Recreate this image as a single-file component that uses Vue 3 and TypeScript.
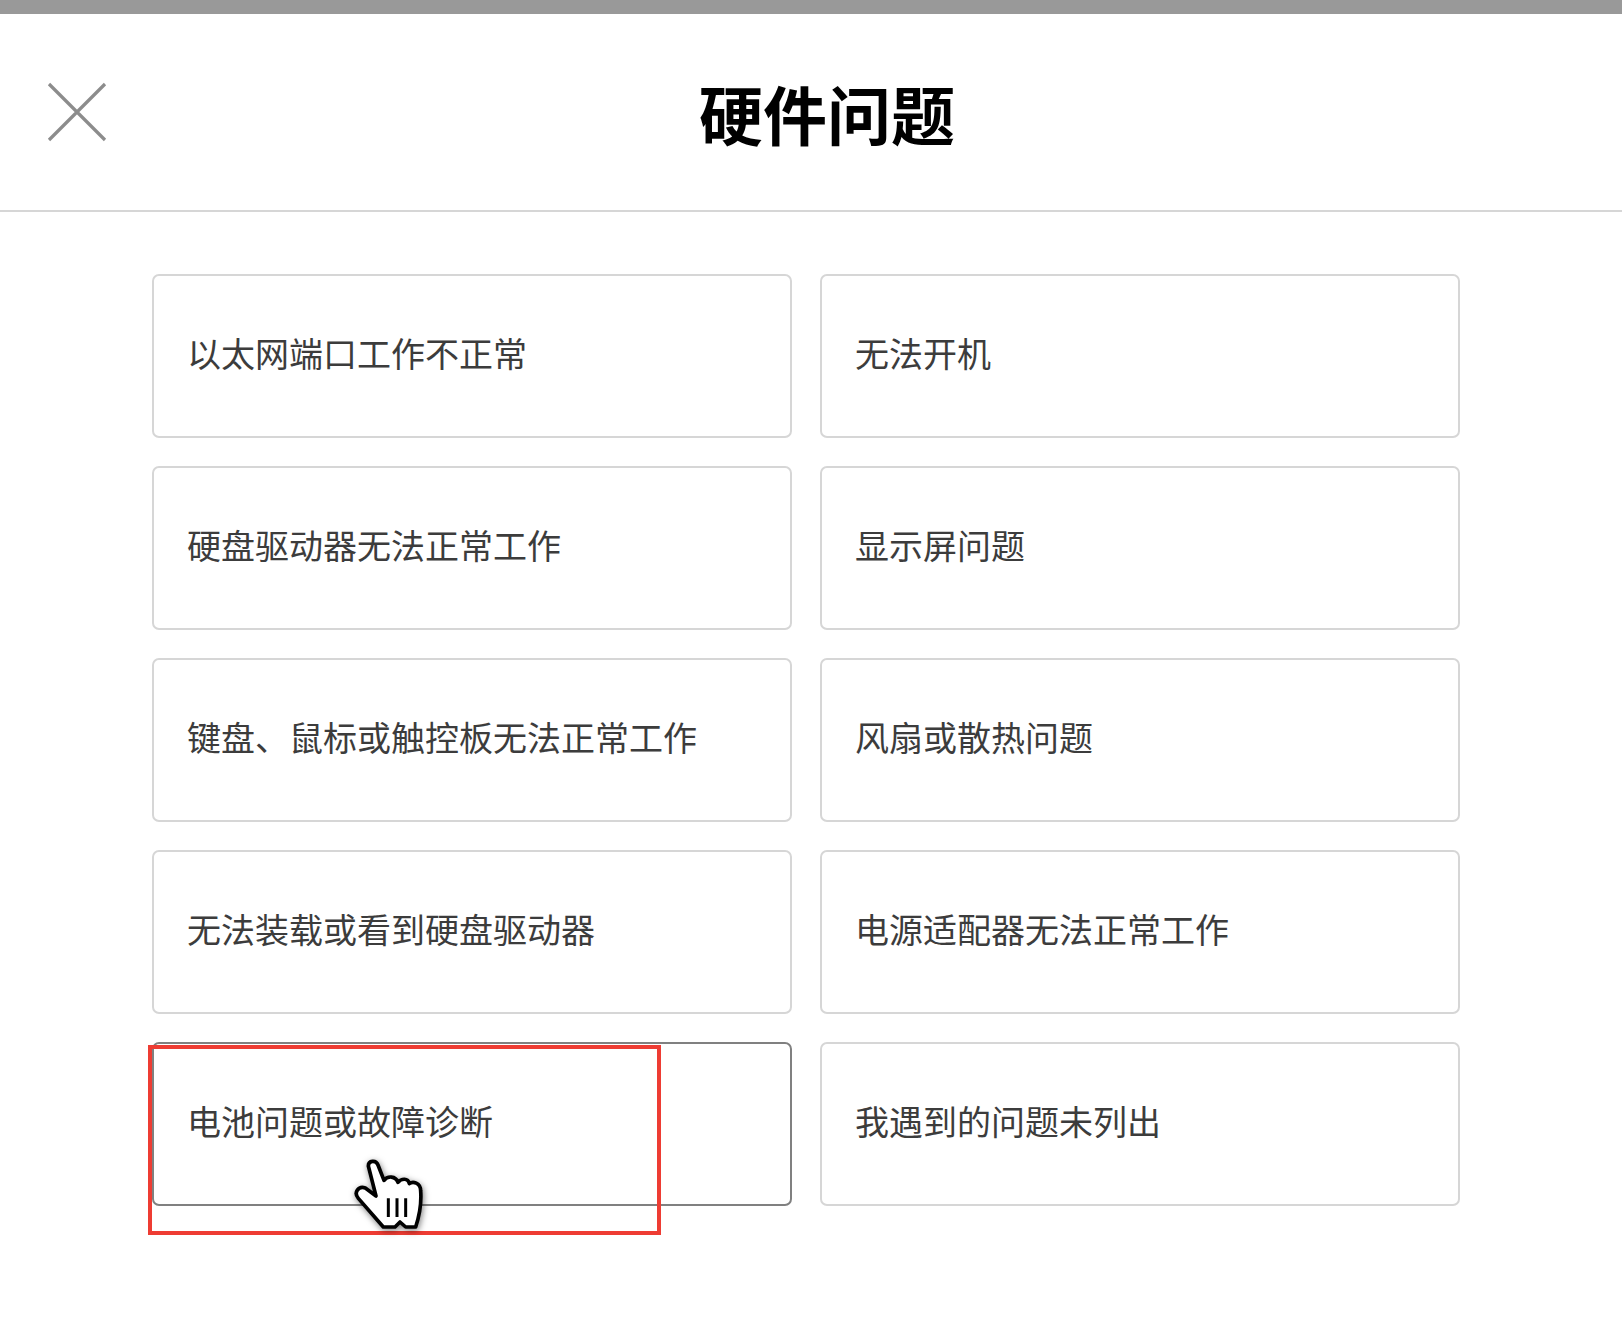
<script setup lang="ts">
const issues: string[] = [
  '以太网端口工作不正常',
  '无法开机',
  '硬盘驱动器无法正常工作',
  '显示屏问题',
  '键盘、鼠标或触控板无法正常工作',
  '风扇或散热问题',
  '无法装载或看到硬盘驱动器',
  '电源适配器无法正常工作',
  '电池问题或故障诊断',
  '我遇到的问题未列出',
]
const activeIndex = 8
</script>

<template>
  <div class="page">
    <div class="top-bar"></div>
    <header class="header">
      <svg class="close" viewBox="0 0 60 60" width="60" height="60">
        <path d="M2 2 L58 58 M58 2 L2 58" stroke="#8c8c8c" stroke-width="3.2" fill="none" />
      </svg>
      <h1 class="title">硬件问题</h1>
    </header>
    <main class="grid">
      <div
        v-for="(item, index) in issues"
        :key="item"
        class="card"
        :class="{ active: index === activeIndex }"
      >
        <span class="label">{{ item }}</span>
        <template v-if="index === activeIndex">
          <div class="highlight"></div>
          <svg class="hand" viewBox="0 0 300 270" width="100" height="90">
            <path
              d="M85 75 C85 58 108 56 114 72 L132 118 C142 104 167 104 174 124 C184 112 204 110 208 128 C218 120 242 124 242 150 C245 190 238 225 227 258 L197 258 L180 243 L165 258 L130 258 L55 172 C40 155 55 134 76 141 L108 165 Z"
              fill="#fff"
              stroke="#000"
              stroke-width="11"
              stroke-linejoin="round"
            />
            <path d="M145 172 V228 M171 172 V228 M197 172 V228" stroke="#000" stroke-width="9" fill="none" />
          </svg>
        </template>
      </div>
    </main>
  </div>
</template>

<style scoped>
.page {
  width: 1622px;
  height: 1326px;
  background: #fff;
  font-family: "Noto Sans CJK SC", "Noto Sans", sans-serif;
}

.top-bar {
  height: 14px;
  background: #999;
}

.header {
  position: relative;
  display: flex;
  align-items: center;
  justify-content: center;
  height: 196px;
  border-bottom: 2px solid #d6d6d6;
}

.close {
  position: absolute;
  left: 47px;
  top: 68px;
}

.title {
  margin: 0;
  position: relative;
  left: 16px;
  font-size: 64px;
  font-weight: 700;
  line-height: 1;
  color: #000;
}

.grid {
  display: grid;
  grid-template-columns: 640px 640px;
  grid-auto-rows: 164px;
  column-gap: 28px;
  row-gap: 28px;
  padding: 62px 0 0 152px;
}

.card {
  position: relative;
  display: flex;
  align-items: center;
  box-sizing: border-box;
  padding: 0 33px 8px;
  border: 2px solid #d6d6d6;
  border-radius: 7px;
  font-size: 34px;
  color: #3c3c3c;
}

.card.active {
  border-color: #808080;
}

.highlight {
  position: absolute;
  left: -6px;
  top: 1px;
  width: 513px;
  height: 190px;
  border: 4px solid #ee3c33;
  box-sizing: border-box;
}

.hand {
  position: absolute;
  left: 186px;
  top: 97px;
  filter: drop-shadow(1px 2px 3px rgba(0, 0, 0, 0.5));
}
</style>
